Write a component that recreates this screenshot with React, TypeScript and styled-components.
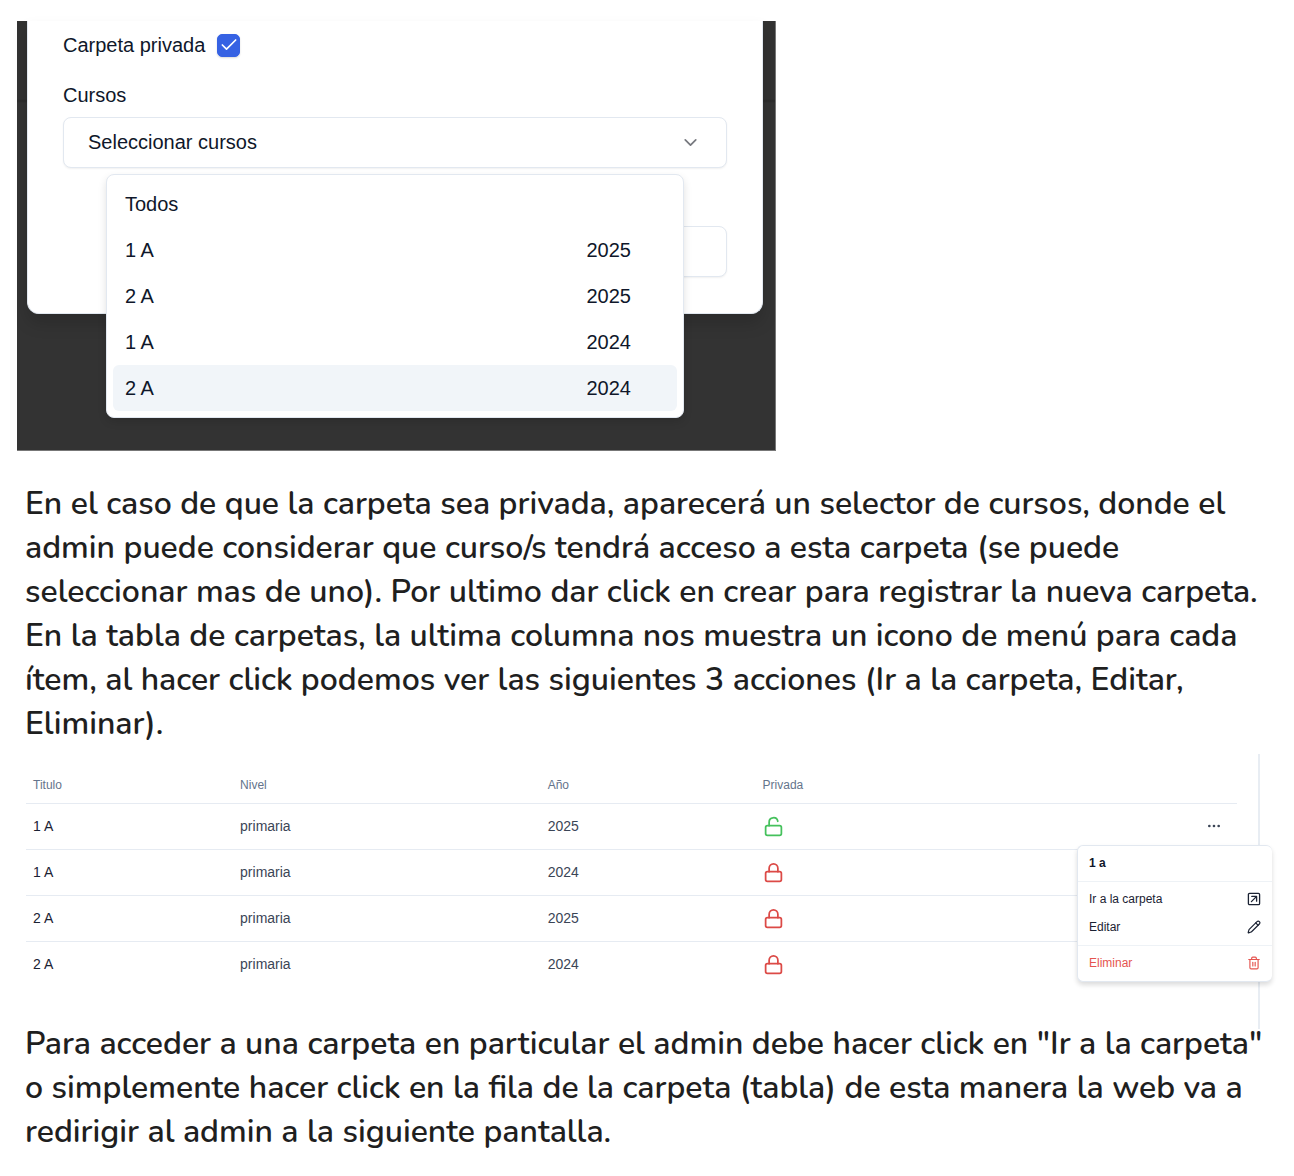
import React, { useState } from 'react';
import styled, { createGlobalStyle } from 'styled-components';
import {
  Check,
  ChevronDown,
  Ellipsis,
  Lock,
  LockOpen,
  Pencil,
  Trash2,
} from 'lucide-react';

const GlobalStyle = createGlobalStyle`
  *, *::before, *::after { box-sizing: border-box; }
  body {
    margin: 0;
    background: #fff;
    color: #0f172a;
    font-family: "Liberation Sans", Arial, sans-serif;
  }
  button, select, input { font: inherit; color: inherit; }
`;

const Page = styled.main`
  padding: 21px 22px 20px 17px;
`;

const Backdrop = styled.section`
  position: relative;
  max-width: 759px;
  padding: 0 12px 136px 10px;
  border-right: 1px solid #777;
  border-bottom: 1px solid #777;
  background: linear-gradient(#323232 78px, #2b2b2b 80px, #333 82px);
`;

const Dialog = styled.form`
  display: flex;
  flex-direction: column;
  padding: 12px 35px 36px;
  border: 1px solid #e2e8f0;
  border-top: 0;
  border-radius: 0 0 12px 12px;
  background: #fff;
  box-shadow: 0 10px 16px rgba(0, 0, 0, 0.15);
  font-size: 20px;
  line-height: 24px;
`;

const CheckRow = styled.label`
  display: flex;
  align-items: center;
  gap: 12px;
  margin-bottom: 26px;
`;

const CheckBox = styled.span`
  display: grid;
  width: 23px;
  height: 23px;
  border-radius: 5px;
  color: #fff;
  box-shadow: 0 1px 2px rgba(0, 0, 0, 0.15);

  input, svg { grid-area: 1 / 1; }
  input {
    appearance: none;
    width: 23px;
    height: 23px;
    margin: 0;
    border: 1px solid #3662e3;
    border-radius: 5px;
    background: #fff;
  }
  input:checked { background: #3662e3; }
  svg { place-self: center; pointer-events: none; }
`;

const FieldLabel = styled.label`
  margin-bottom: 10px;
`;

const SelectBox = styled.div`
  display: grid;
  align-items: center;
  margin-bottom: 58px;

  select, svg { grid-area: 1 / 1; }
  select {
    appearance: none;
    width: 100%;
    height: 51px;
    padding: 0 24px 2px;
    border: 1px solid #e2e8f0;
    border-radius: 8px;
    background: #fff;
    box-shadow: 0 1px 2px rgba(0, 0, 0, 0.06);
  }
  svg {
    justify-self: end;
    margin-right: 26px;
    color: #77797f;
    pointer-events: none;
  }
`;

const SubmitButton = styled.button`
  align-self: flex-end;
  width: 50%;
  height: 51px;
  border: 1px solid #e2e8f0;
  border-radius: 8px;
  background: #fff;
  box-shadow: 0 1px 2px rgba(0, 0, 0, 0.06);
`;

const Options = styled.div`
  position: absolute;
  top: 153px;
  right: 91px;
  left: 89px;
  padding: 6px;
  border: 1px solid #e2e8f0;
  border-radius: 8px;
  background: #fff;
  box-shadow: 0 4px 8px rgba(0, 0, 0, 0.12);
`;

const Option = styled.button<{ $active: boolean }>`
  display: flex;
  align-items: center;
  justify-content: space-between;
  width: 100%;
  height: 46px;
  padding: 0 46px 0 12px;
  border: 0;
  border-radius: 6px;
  background: ${({ $active }) => ($active ? '#f1f5f9' : 'transparent')};
  font-size: 20px;
  text-align: left;
`;

const Paragraph = styled.p`
  margin: 0;
  padding-left: 8px;
  color: #1f1f1f;
  font-family: Nunito, Lato, sans-serif;
  font-size: 32px;
  font-weight: 600;
  line-height: 44px;
`;

const Intro = styled(Paragraph)`
  margin-top: 31px;
`;

const TableShot = styled.section`
  position: relative;
  margin: 8px 0 -7px;
`;

const TablePanel = styled.div`
  min-height: 275px;
  margin-right: 12px;
  padding: 13px 21px 0 9px;
  border-right: 2px solid #e8edf3;
`;

const Table = styled.table`
  width: 100%;
  border-collapse: collapse;
  table-layout: fixed;
  font-size: 14px;
`;

const Col = styled.col<{ $width?: string }>`
  width: ${({ $width }) => $width ?? 'auto'};
`;

const HeadCell = styled.th`
  height: 36px;
  padding: 0 7px;
  border-bottom: 1px solid #e6ebf2;
  color: #64748b;
  font-size: 12px;
  font-weight: 400;
  text-align: left;
`;

const Row = styled.tr`
  height: 46px;
  color: #3b4556;

  &:not(:last-child) { border-bottom: 1px solid #e6ebf2; }
`;

const Cell = styled.td`
  padding: 0 7px;

  &:first-child { color: #1b2233; }
  svg { display: block; }
`;

const MoreButton = styled.button`
  display: block;
  margin: 0 8px 0 auto;
  padding: 0;
  border: 0;
  background: none;
`;

const Menu = styled.div`
  position: absolute;
  top: 91px;
  right: 0;
  width: 195px;
  padding: 4px 0;
  border: 1px solid #e2e8f0;
  border-right: 0;
  border-radius: 6px;
  background: #fff;
  box-shadow: 0 3px 5px rgba(0, 0, 0, 0.14);
  font-size: 12px;
`;

const MenuTitle = styled.div`
  padding: 0 11px;
  font-weight: 700;
  line-height: 27px;
`;

const Divider = styled.hr`
  height: 1px;
  margin: 4px 0 3px;
  border: 0;
  background: #eef2f6;
`;

const MenuItem = styled.button<{ $danger?: boolean }>`
  display: flex;
  align-items: center;
  justify-content: space-between;
  width: 100%;
  height: 28px;
  padding: 0 11px;
  border: 0;
  background: none;

  && { color: ${({ $danger }) => ($danger ? '#e5544f' : '#1b2233')}; }
`;

const courses = [
  { name: 'Todos', year: '' },
  { name: '1 A', year: '2025' },
  { name: '2 A', year: '2025' },
  { name: '1 A', year: '2024' },
  { name: '2 A', year: '2024' },
];

const folders = [
  { title: '1 A', level: 'primaria', year: 2025, locked: false },
  { title: '1 A', level: 'primaria', year: 2024, locked: true },
  { title: '2 A', level: 'primaria', year: 2025, locked: true },
  { title: '2 A', level: 'primaria', year: 2024, locked: true },
];

function OpenIcon() {
  return (
    <svg
      width="14"
      height="14"
      viewBox="0 0 14 14"
      fill="none"
      stroke="currentColor"
      strokeWidth="1.3"
      strokeLinecap="round"
      strokeLinejoin="round"
      aria-hidden="true"
    >
      <rect x="1.4" y="1.4" width="11.2" height="11.2" rx="1.2" />
      <path d="M4.8 4.4h4.8v4.8M9.6 4.4 4.4 9.6" />
    </svg>
  );
}

function FolderDialog() {
  const [isPrivate, setPrivate] = useState(true);
  const [active, setActive] = useState(4);
  return (
    <Backdrop>
      <Dialog onSubmit={(e) => e.preventDefault()}>
        <CheckRow>
          Carpeta privada
          <CheckBox>
            <input
              type="checkbox"
              checked={isPrivate}
              onChange={(e) => setPrivate(e.target.checked)}
            />
            <Check size={20} strokeWidth={2} />
          </CheckBox>
        </CheckRow>
        <FieldLabel htmlFor="cursos">Cursos</FieldLabel>
        <SelectBox>
          <select id="cursos">
            <option>Seleccionar cursos</option>
          </select>
          <ChevronDown size={21} strokeWidth={2} />
        </SelectBox>
        <SubmitButton type="submit" aria-label="Crear" />
      </Dialog>
      <Options role="listbox" aria-label="Cursos">
        {courses.map((course, i) => (
          <Option
            key={i}
            type="button"
            role="option"
            aria-selected={i === active}
            $active={i === active}
            onMouseEnter={() => setActive(i)}
          >
            <span>{course.name}</span>
            {course.year && <span>{course.year}</span>}
          </Option>
        ))}
      </Options>
    </Backdrop>
  );
}

function FolderTable() {
  return (
    <TableShot>
      <TablePanel>
        <Table>
          <colgroup>
            <Col $width="17.1%" />
            <Col $width="25.4%" />
            <Col $width="17.75%" />
            <Col />
            <Col $width="10%" />
          </colgroup>
          <thead>
            <tr>
              <HeadCell>Titulo</HeadCell>
              <HeadCell>Nivel</HeadCell>
              <HeadCell>Año</HeadCell>
              <HeadCell>Privada</HeadCell>
              <HeadCell />
            </tr>
          </thead>
          <tbody>
            {folders.map((folder, i) => (
              <Row key={i}>
                <Cell>{folder.title}</Cell>
                <Cell>{folder.level}</Cell>
                <Cell>{folder.year}</Cell>
                <Cell>
                  {folder.locked ? (
                    <Lock size={21} color="#dc4a46" strokeWidth={2} />
                  ) : (
                    <LockOpen size={21} color="#45c15c" strokeWidth={2} />
                  )}
                </Cell>
                <Cell>
                  {i === 0 && (
                    <MoreButton type="button" aria-label="Acciones">
                      <Ellipsis size={16} />
                    </MoreButton>
                  )}
                </Cell>
              </Row>
            ))}
          </tbody>
        </Table>
      </TablePanel>
      <Menu>
        <MenuTitle>1 a</MenuTitle>
        <Divider />
        <MenuItem type="button">
          Ir a la carpeta
          <OpenIcon />
        </MenuItem>
        <MenuItem type="button">
          Editar
          <Pencil size={14} strokeWidth={2} />
        </MenuItem>
        <Divider />
        <MenuItem type="button" $danger>
          Eliminar
          <Trash2 size={14} strokeWidth={2} />
        </MenuItem>
      </Menu>
    </TableShot>
  );
}

export default function App() {
  return (
    <Page>
      <GlobalStyle />
      <FolderDialog />
      <Intro>
        En el caso de que la carpeta sea privada, aparecerá un selector de cursos, donde el
        <br />
        admin puede considerar que curso/s tendrá acceso a esta carpeta (se puede
        <br />
        seleccionar mas de uno). Por ultimo dar click en crear para registrar la nueva carpeta.
        <br />
        En la tabla de carpetas, la ultima columna nos muestra un icono de menú para cada
        <br />
        ítem, al hacer click podemos ver las siguientes 3 acciones (Ir a la carpeta, Editar,
        <br />
        Eliminar).
      </Intro>
      <FolderTable />
      <Paragraph>
        Para acceder a una carpeta en particular el admin debe hacer click en "Ir a la carpeta"
        <br />
        o simplemente hacer click en la fila de la carpeta (tabla) de esta manera la web va a
        <br />
        redirigir al admin a la siguiente pantalla.
      </Paragraph>
    </Page>
  );
}
